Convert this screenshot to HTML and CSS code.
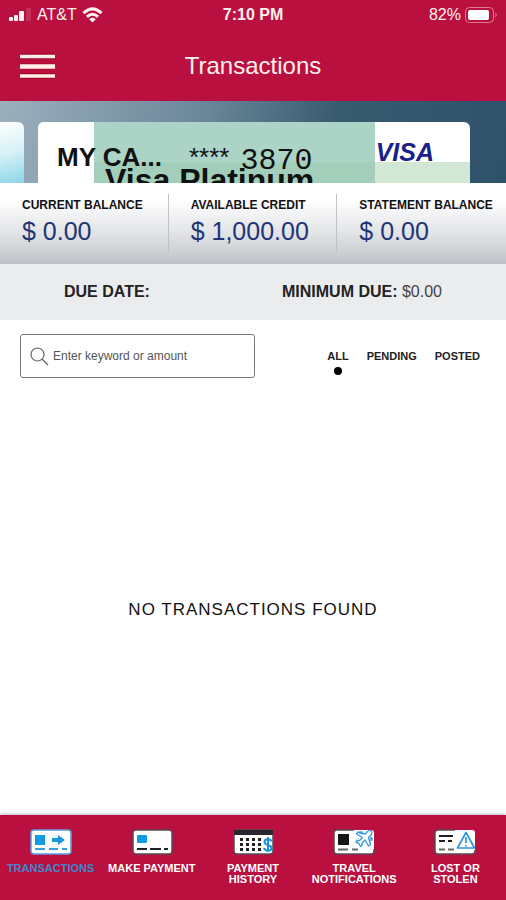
FILE: index.html
```html
<!DOCTYPE html>
<html lang="en">
<head>
<meta charset="utf-8">
<meta name="viewport" content="width=device-width, initial-scale=1">
<title>Transactions</title>
<link rel="stylesheet" href="styles.css">
</head>
<body>
<header class="header">
  <div class="status">
    <div class="status-side">
      <svg width="24" height="14" viewBox="0 0 24 14" fill="#fff1ee" aria-hidden="true"><rect x="1" y="9" width="4" height="4" rx="1"/><rect x="6" y="7" width="4" height="6" rx="1"/><rect x="11" y="3" width="5" height="10" rx="1"/><rect x="18" y="0" width="5" height="13" rx="1" opacity=".15"/></svg>
      <span>AT&amp;T</span>
      <svg class="wifi" width="21" height="16" viewBox="0 0 21 16" fill="none" stroke="#fff1ee" stroke-width="3" aria-hidden="true"><path d="M1.5 6.2Q10.500-2.500 19.500 6.200M5 9.800Q10.500 4.800 16 9.800"/><path d="M7.200 12.200Q10.500 9.400 13.800 12.200L10.500 15.500Z" fill="#fff1ee" stroke="none"/></svg>
    </div>
    <span class="time">7:10 PM</span>
    <div class="status-side status-end">
      <span>82%</span>
      <svg width="33" height="16" viewBox="0 0 33 16" aria-hidden="true"><rect x=".5" y=".5" width="28" height="15" rx="4" fill="none" stroke="#e07a90"/><rect x="3" y="3" width="21" height="10" rx="2" fill="#fff"/><path d="M30.500 5.500Q33 8 30.500 10.500Z" fill="#e48a9d"/></svg>
    </div>
  </div>
  <div class="titlebar">
    <button class="menu" aria-label="Menu"><svg width="35" height="26" viewBox="0 0 35 26" aria-hidden="true"><path d="M0 3.500h35M0 13.500h35M0 23h35" stroke="#a60a24" stroke-width="6"/><path d="M0 3.500h35M0 23h35" stroke="#fff0ed" stroke-width="3.500"/><path d="M0 13.500h35" stroke="#fff0ed" stroke-width="4.500"/></svg></button>
    <h1>Transactions</h1>
  </div>
</header>

<section class="carousel" aria-label="Cards">
  <div class="card-previous"></div>
  <article class="card">
    <div class="art"></div>
    <div class="card-line">
      <span class="card-name">MY CA...</span>
      <span class="mask">****</span>
      <span class="digits">3870</span>
      <span class="visa">VISA</span>
    </div>
    <div class="product">Visa Platinum</div>
  </article>
</section>

<dl class="balances">
  <div class="balance"><dt>CURRENT BALANCE</dt><dd>$ 0.00</dd></div>
  <div class="balance"><dt>AVAILABLE CREDIT</dt><dd>$ 1,000.00</dd></div>
  <div class="balance"><dt>STATEMENT BALANCE</dt><dd>$ 0.00</dd></div>
</dl>

<div class="due">
  <strong class="due-date">DUE DATE:</strong>
  <p class="due-minimum"><strong>MINIMUM DUE:</strong> $0.00</p>
</div>

<main class="main">
  <div class="filters">
    <label class="search">
      <svg width="19" height="19" viewBox="0 0 19 19" fill="none" stroke="#666" stroke-width="1.200" aria-hidden="true"><circle cx="7.500" cy="7.500" r="6.500"/><path d="M12 12l6 6"/></svg>
      <input type="search" aria-label="Search transactions" placeholder="Enter keyword or amount">
    </label>
    <div class="tabs">
      <button class="tab selected">ALL</button>
      <button class="tab">PENDING</button>
      <button class="tab">POSTED</button>
    </div>
  </div>
  <p class="empty">NO TRANSACTIONS FOUND</p>
</main>

<nav class="nav">
  <a class="nav-item current" href="#transactions">
    <svg width="42" height="26" viewBox="0 0 42 26" aria-hidden="true"><rect x="1" y="1" width="40" height="24" rx="3" fill="#fff" stroke="#5a9fe0" stroke-width="1.500"/><rect x="5" y="6" width="10" height="10" fill="#129be5"/><path d="M22 9h6V6l7 5-7 5v-3h-6z" fill="#1b98e2"/><path d="M5 20h10M19 20h9M32 20h5" stroke="#3c9bdc" stroke-width="2"/></svg>
    <span>TRANSACTIONS</span>
  </a>
  <a class="nav-item" href="#payment">
    <svg width="42" height="26" viewBox="0 0 42 26" aria-hidden="true"><rect x="2" y="1" width="39" height="24" rx="3" fill="#fff" stroke="#574a50" stroke-width="1.500"/><rect x="6" y="6" width="10" height="8" rx="1" fill="#129be5"/><path d="M6 20h10M19 20h11M33 20h4" stroke="#202024" stroke-width="2"/></svg>
    <span>MAKE PAYMENT</span>
  </a>
  <a class="nav-item" href="#history">
    <svg width="42" height="26" viewBox="0 0 42 26" aria-hidden="true"><rect x="2" y="1" width="39" height="24" rx="3" fill="#fff" stroke="#574a50" stroke-width="1.500"/><path d="M2 1h39v5H2z" fill="#29272e"/><path d="M8 10.500h21M8 15.500h21M8 20.500h21" stroke="#222" stroke-width="3" stroke-dasharray="3 3"/><path d="M39.500 12.500c-1-3-7-3-7 .5 0 4 7 2 7 6 0 3.500-6.500 3.500-7.500 0M36 8v15" fill="none" stroke="#1794dd" stroke-width="2"/></svg>
    <span>PAYMENT<br>HISTORY</span>
  </a>
  <a class="nav-item" href="#travel">
    <svg width="42" height="26" viewBox="0 0 42 26" aria-hidden="true"><path d="M22 1H4Q1 1 1 4v18q0 3 3 3h34q3 0 3-3V4q0-3-3-3H22" fill="#fff"/><path d="M21 1H4Q1 1 1 4v18q0 3 3 3h34q3 0 3-3v-2" fill="none" stroke="#574a50" stroke-width="1.500"/><rect x="5" y="5" width="11" height="11" fill="#171719"/><path d="M5 20.500h10M19 20.500h6" stroke="#666" stroke-width="2"/><path d="M38.500 2.500c1 1 0 3-1 4l-2 2 2 7-2 1.500-3.500-6-3 3v2.500l-1.500 1-1.500-3-3-1.500 1-1.500H26.500l3-3-6-3.500 1.500-2 7 2 2-2c1.500-1.500 3.500-2 4.500-1zM27 5V3h2v2.500M37 11h2V9h-2" fill="none" stroke="#3b9bdd" stroke-width="1.400" stroke-linejoin="round"/></svg>
    <span>TRAVEL<br>NOTIFICATIONS</span>
  </a>
  <a class="nav-item" href="#lost">
    <svg width="42" height="26" viewBox="0 0 42 26" aria-hidden="true"><path d="M22 1H4Q1 1 1 4v18q0 3 3 3h34q3 0 3-3V4q0-3-3-3H22" fill="#fff"/><path d="M21 1H4Q1 1 1 4v18q0 3 3 3h34q3 0 3-3v-1" fill="none" stroke="#574a50" stroke-width="1.500"/><path d="M5 7h14M5 12h6M14 12h4" stroke="#1e1e22" stroke-width="2"/><path d="M5 20.500h6M14 20.500h6" stroke="#666" stroke-width="2"/><path d="M32 3.500L23.500 19h17zM32 8v6M32 16v1.500" fill="none" stroke="#2c93dc" stroke-width="1.700" stroke-linejoin="round"/></svg>
    <span>LOST OR<br>STOLEN</span>
  </a>
</nav>
</body>
</html>
```

FILE: styles.css
```css
* { box-sizing: border-box; }
body {
  margin: 0;
  min-height: 100vh;
  display: flex;
  flex-direction: column;
  background: #fff;
  color: #111;
  font-family: "Liberation Sans", Arial, sans-serif;
}
h1, p, dl, dd { margin: 0; }
button { padding: 0; border: 0; background: none; color: inherit; font: inherit; }
svg { display: block; flex: none; }

.header { background: #b9103f; color: #fff0ed; }
.status {
  height: 30px;
  padding: 0 8px;
  display: grid;
  grid-template-columns: 1fr auto 1fr;
  align-items: center;
  font-size: 16px;
}
.status-side { display: flex; align-items: center; gap: 5px; }
.status-end { justify-content: flex-end; gap: 4px; }
.time { font-weight: bold; }
.titlebar {
  height: 71px;
  padding: 0 20px;
  display: grid;
  grid-template-columns: 1fr auto 1fr;
  align-items: center;
}
.menu { justify-self: start; }
h1 { font-size: 24px; line-height: 28px; font-weight: normal; }

.carousel {
  height: 82px;
  padding-top: 21px;
  display: flex;
  gap: 14px;
  overflow: hidden;
  background: linear-gradient(100deg, #9cafbd, #6a8799 40%, #395b70 65%, #2f526b);
}
.card-previous {
  width: 24px;
  border-radius: 0 6px 0 0;
  background: linear-gradient(165deg, #fff, #d4f1f7 50%, #8bd5e8);
}
.card {
  position: relative;
  flex: 1;
  margin-right: 36px;
  border-radius: 6px 6px 0 0;
  overflow: hidden;
  background: linear-gradient(#fff 40px, #d3e7d5 40px);
}
.art {
  position: absolute;
  inset: 0 22% 0 0;
  border-left: 56px solid #fff;
  background: linear-gradient(#acd4c6 40px, #a3cfba 40px);
}
.card-line {
  position: relative;
  display: flex;
  align-items: center;
  height: 60px;
  padding: 10px 36px 0 19px;
}
.card-name { font-size: 26px; font-weight: bold; }
.mask { margin: 0 11px 0 27px; font-size: 26px; line-height: 26px; }
.digits { padding-top: 8px; font-family: "Liberation Mono", monospace; font-size: 30px; line-height: 30px; }
.visa {
  margin-left: auto;
  padding-bottom: 10px;
  color: #18208b;
  font-size: 25px;
  font-weight: bold;
  font-style: italic;
}
.product {
  position: absolute;
  top: 40px;
  left: 67px;
  font-size: 32px;
  line-height: 36px;
  font-weight: bold;
  white-space: nowrap;
}

.balances {
  height: 81px;
  padding: 11px 0 12px;
  display: grid;
  grid-template-columns: repeat(3, 1fr);
  background: linear-gradient(#fff 20%, #dfe1e4 65%, #bec2c7);
}
.balance { padding: 4px 0 0 22px; border-right: 1px solid #c0c2c5; white-space: nowrap; }
.balance:last-child { border-right: 0; }
dt { font-size: 12px; line-height: 14px; font-weight: bold; }
dd { margin-top: 5px; color: #203477; font-size: 25px; line-height: 28px; }

.due {
  height: 56px;
  padding: 0 64px;
  display: flex;
  align-items: center;
  justify-content: space-between;
  background: #ebecee;
  font-size: 16px;
  color: #444;
}
.due strong { color: #222; }

.main { flex: 1; display: flex; flex-direction: column; }
.filters {
  padding: 14px 26px 14px 20px;
  display: flex;
  align-items: center;
  justify-content: space-between;
}
.search {
  width: 51%;
  height: 44px;
  padding: 0 9px;
  display: flex;
  align-items: center;
  gap: 4px;
  border: 1px solid #777;
  border-radius: 3px;
}
.search input {
  min-width: 0;
  flex: 1;
  padding: 0;
  border: 0;
  outline: 0;
  background: none;
  font: 12px "Liberation Sans", Arial, sans-serif;
}
.search input::placeholder { color: #555; opacity: 1; }
.tabs { display: flex; gap: 18px; }
.tab { position: relative; font-size: 11px; line-height: 16px; font-weight: bold; color: #222; }
.selected::after {
  content: "";
  position: absolute;
  top: 19px;
  left: calc(50% - 4px);
  width: 8px;
  height: 8px;
  border-radius: 50%;
  background: #000;
}
.empty {
  flex: 1;
  display: flex;
  align-items: center;
  justify-content: center;
  padding-top: 12px;
  font-size: 17px;
  letter-spacing: 1px;
}

.nav {
  min-height: 85px;
  padding-top: 14px;
  display: grid;
  grid-template-columns: repeat(5, 1fr);
  background: #b9103f;
  box-shadow: 0 -1px 3px #bbb;
}
.nav-item {
  display: flex;
  flex-direction: column;
  align-items: center;
  gap: 8px;
  color: #fff;
  font-size: 11px;
  line-height: 11px;
  font-weight: bold;
  text-align: center;
  text-decoration: none;
  white-space: nowrap;
}
.current { color: #4386cc; }
```
